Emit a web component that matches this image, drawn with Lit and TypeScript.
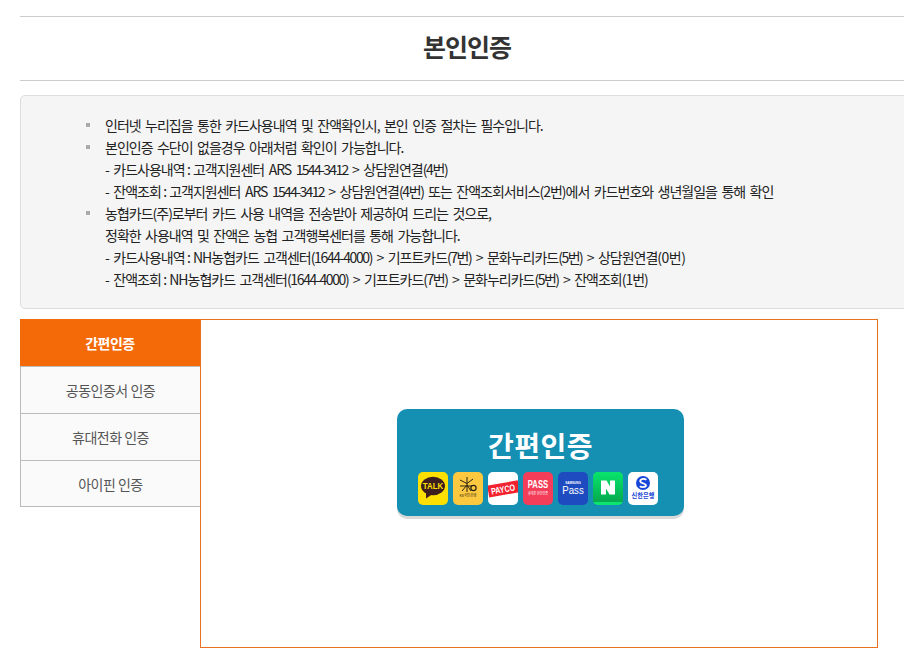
import { LitElement, html, css, svg } from "lit";
import { customElement } from "lit/decorators.js";

const KR = `"Noto Sans CJK KR", "Noto Sans", sans-serif`;
const LAT = `"Liberation Sans", sans-serif`;

/* Small label inside a logo: squeezed horizontally with a transform so its box stays inside the icon. */
const label = (
  x: number,
  y: number,
  size: number,
  sx: number,
  text: string,
  fill: string,
  weight = 400,
  family = LAT,
) =>
  svg`<text transform="translate(${x} ${y}) scale(${sx} 1)" text-anchor="middle" font-size="${size}" font-weight="${weight}" font-family="${family}" fill="${fill}">${text}</text>`;

const icons = [
  svg`<rect width="30" height="33" rx="5" fill="#fee000"/>
    <ellipse cx="15" cy="14" rx="12" ry="9.2" fill="#3c1e1e"/>
    <path d="M8 20 L8 26.5 L14.5 22 Z" fill="#3c1e1e"/>
    ${label(15, 17, 8.4, 0.93, "TALK", "#fee000", 700)}`,
  svg`<rect width="30" height="33" rx="5" fill="#fbc840"/>
    <path d="M7 8 L14 11.5 L20 7 M14 5 V20 M7 14 H19 M9 19 L14 13 L18 19" fill="none" stroke="#2c2410" stroke-width="1"/>
    <circle cx="20.5" cy="16" r="2.6" fill="none" stroke="#2c2410" stroke-width="1.2"/>
    ${label(15, 25, 4, 0.85, "KB국민은행", "#3a3010", 400, KR)}`,
  svg`<rect width="30" height="33" rx="5" fill="#fff"/>
    <g transform="rotate(-10 15 17)"><path d="M0 11 H31 V23 H0 Z" fill="#f3222f"/>
    ${label(15, 20.5, 9, 0.8, "PAYCO", "#fff", 700)}</g>`,
  svg`<rect width="30" height="33" rx="5" fill="#f33d59"/>
    ${label(15, 16, 11, 0.7, "PASS", "#fff", 700)}
    ${label(15, 23, 4, 0.75, "휴대폰 본인인증", "#fff", 400, KR)}`,
  svg`<rect width="30" height="33" rx="5" fill="#1e4bc0"/>
    ${label(15, 12, 3.6, 0.85, "SAMSUNG", "#fff", 700)}
    ${label(15, 21.5, 10.5, 0.92, "Pass", "#fff")}`,
  svg`<rect width="30" height="33" rx="5" fill="#0ce66f"/>
    <path d="M0 5 a5 5 0 0 1 5 -5 H25 a5 5 0 0 1 5 5 V30 H0 Z" fill="url(#naver)"/>
    <path d="M8 8.5 H13.5 L17 14.5 V8.5 H22 V22.5 H16.5 L13 16.5 V22.5 H8 Z" fill="#fff"/>`,
  svg`<rect width="30" height="33" rx="5" fill="#fff"/>
    <circle cx="15" cy="11" r="7" fill="#1746d8"/>
    <path d="M18.4 7.8 C15.5 6 11.6 7.4 12.4 9.8 C13 11.6 17.8 11 18 13.2 C18.1 15.2 14 15.6 11.8 14.2" fill="none" stroke="#fff" stroke-width="1.8"/>
    ${label(15, 25.5, 6.4, 0.97, "신한은행", "#1746d8", 700, KR)}`,
];

@customElement("app-root")
export class AppRoot extends LitElement {
  static styles = css`
    :host { display: block; width: 904px; height: 663px; overflow: hidden; background: #fff; font-family: "Noto Sans CJK KR", "Noto Sans", sans-serif; }
    .page { width: 894px; margin-left: 20px; padding-top: 16px; }
    .title { box-sizing: content-box; height: 57px; padding-bottom: 6px; border-top: 1px solid #ccc; border-bottom: 1px solid #ccc; margin: 0; display: flex; align-items: center; justify-content: center; font-size: 25px; font-weight: 700; color: #333; letter-spacing: -1px; }
    .notice { margin-top: 14px; box-sizing: border-box; height: 214px; border: 1px solid #ddd; border-radius: 5px; background: #f5f5f5; padding: 18px 0 0 84px; font-size: 14px; line-height: 22px; color: #222; letter-spacing: -1px; word-spacing: 2.3px; }
    .item { position: relative; }
    .item.b::before { content: ""; position: absolute; left: -19px; top: 9px; width: 4px; height: 4px; background: #aaa; }
    .colon { word-spacing: 0; letter-spacing: -0.6px; }
    .tel { letter-spacing: -1.67px; }
    .tel2 { letter-spacing: -1.38px; }
    .paren { letter-spacing: -1.35px; }
    .paren2 { letter-spacing: -1.5px; }
    .paren3 { letter-spacing: -0.5px; }
    .tabs { margin-top: 10px; display: flex; align-items: flex-start; width: 858px; }
    .menu { width: 180px; flex: none; }
    .tab { box-sizing: border-box; height: 47px; display: flex; align-items: center; justify-content: center; background: #fafafa; border-left: 1px solid #bbb; border-top: 1px solid #bbb; font-size: 14px; color: #555; letter-spacing: -0.5px; }
    .tab:last-child { border-bottom: 1px solid #bbb; }
    .tab.on { background: #f46a08; border: 0; color: #fff; font-weight: 700; }
    .panel { flex: 1; box-sizing: border-box; height: 329px; border: 1px solid #e9701f; padding: 89px 0 0 196px; background: #fff; }
    .card { box-sizing: border-box; width: 287px; height: 107px; border-radius: 10px; background: #1590b3; box-shadow: 0 3px 0 #d9d9d9; display: flex; flex-direction: column; align-items: center; padding-top: 16px; }
    .card h2 { margin: 0; font-size: 28px; line-height: 40px; font-weight: 700; color: #fff; letter-spacing: 0.5px; }
    .icons { display: flex; gap: 5px; margin-top: 7px; padding-right: 5px; }
    .icons svg { display: block; width: 30px; height: 33px; }
  `;

  render() {
    const colon = html`<span class="colon"> : </span>`;
    return html`<div class="page">
      <h1 class="title">본인인증</h1>
      <div class="notice">
        <div class="item b">인터넷 누리집을 통한 카드사용내역 및 잔액확인시, 본인 인증 절차는 필수입니다.</div>
        <div class="item b">본인인증 수단이 없을경우 아래처럼 확인이 가능합니다.</div>
        <div class="item">- 카드사용내역${colon}고객지원센터 ARS <span class="tel">1544-3412</span> &gt; 상담원연결<span class="paren">(4번)</span></div>
        <div class="item">- 잔액조회${colon}고객지원센터 ARS <span class="tel">1544-3412</span> &gt; 상담원연결<span class="paren">(4번)</span> 또는 잔액조회서비스(2번)에서 카드번호와 생년월일을 통해 확인</div>
        <div class="item b">농협카드(주)로부터 카드 사용 내역을 전송받아 제공하여 드리는 것으로,</div>
        <div class="item">정확한 사용내역 및 잔액은 농협 고객행복센터를 통해 가능합니다.</div>
        <div class="item">- 카드사용내역${colon}NH농협카드 고객센터<span class="tel2">(1644-4000)</span> &gt; 기프트카드<span class="paren2">(7번)</span> &gt; 문화누리카드<span class="paren2">(5번)</span> &gt; 상담원연결<span class="paren3">(0번)</span></div>
        <div class="item">- 잔액조회${colon}NH농협카드 고객센터<span class="tel2">(1644-4000)</span> &gt; 기프트카드<span class="paren2">(7번)</span> &gt; 문화누리카드<span class="paren2">(5번)</span> &gt; 잔액조회(1번)</div>
      </div>
      <div class="tabs">
        <div class="menu">
          <div class="tab on">간편인증</div>
          <div class="tab">공동인증서 인증</div>
          <div class="tab">휴대전화 인증</div>
          <div class="tab">아이핀 인증</div>
        </div>
        <div class="panel">
          <div class="card">
            <h2>간편인증</h2>
            <div class="icons">
              ${icons.map((i) => html`<svg viewBox="0 0 30 33"><defs><linearGradient id="naver" x1="0" y1="0" x2="0" y2="1"><stop offset="0" stop-color="#08e56c"/><stop offset="1" stop-color="#06a94e"/></linearGradient></defs>${i}</svg>`)}
            </div>
          </div>
        </div>
      </div>
    </div>`;
  }
}
